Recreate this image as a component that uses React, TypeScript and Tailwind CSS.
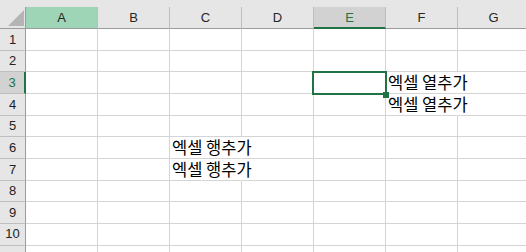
import React from "react";

const COLS = ["A", "B", "C", "D", "E", "F", "G"];
const ROWS = [1, 2, 3, 4, 5, 6, 7, 8, 9, 10, 11];

const TEXTS: Record<string, string> = {
  "3-F": "엑셀 열추가",
  "4-F": "엑셀 열추가",
  "6-C": "엑셀 행추가",
  "7-C": "엑셀 행추가",
};

function ColHeader({ c }: { c: string }) {
  if (c === "A") {
    return (
      <div className="w-[72px] shrink-0 h-full flex items-center justify-center bg-[#9fd5b7] border-r border-[#bdbdbd] border-b border-b-[#9b9b9b] text-[#262626]">
        {c}
      </div>
    );
  }
  if (c === "E") {
    return (
      <div className="w-[72px] shrink-0 h-full flex items-center justify-center bg-[#d2d2d2] border-r border-[#bdbdbd] border-b-2 border-b-[#217346] pt-[1px] text-[#217346]">
        {c}
      </div>
    );
  }
  return (
    <div className="w-[72px] shrink-0 h-full flex items-center justify-center bg-[#e6e6e6] border-r border-[#bdbdbd] border-b border-b-[#9b9b9b] text-[#262626]">
      {c}
    </div>
  );
}

function Cell({ r, c }: { r: number; c: string }) {
  const key = `${r}-${c}`;
  const text = TEXTS[key];
  const selected = r === 3 && c === "E";
  return (
    <div
      className={
        "relative w-[72px] shrink-0 h-full border-b border-[#d4d4d4] " +
        (text ? "border-r border-r-transparent" : "border-r border-r-[#d4d4d4]")
      }
    >
      {text && (
        <div className="absolute left-[2px] bottom-[2px] z-10 whitespace-nowrap text-[16.5px] leading-[17px] text-black font-['Noto_Sans_CJK_KR',sans-serif]">
          {text}
        </div>
      )}
      {selected && (
        <>
          <div className="absolute left-[-2px] top-[-1px] w-[75px] h-[24px] border-2 border-[#217346] z-20" />
          <div className="absolute left-[69px] top-[20px] w-[6px] h-[6px] bg-[#217346] z-30" />
        </>
      )}
    </div>
  );
}

export default function App() {
  return (
    <div className="w-[526px] h-[252px] overflow-hidden bg-white font-['Liberation_Sans',Arial,sans-serif] text-[13px]">
      <div className="h-[7px] bg-[#e6e6e6]" />
      <div className="flex h-[22px]">
        <div className="relative w-[26px] shrink-0 h-full bg-[#e6e6e6] border-r border-[#9b9b9b] border-b border-b-[#9b9b9b]">
          <svg className="absolute left-[8px] top-[3px]" width="16" height="16" viewBox="0 0 16 16">
            <polygon points="0,16 16,0 16,16" fill="#b4b4b4" />
          </svg>
        </div>
        {COLS.map((c) => (
          <ColHeader key={c} c={c} />
        ))}
      </div>
      {ROWS.map((r) => (
        <div key={r} className="flex h-[21.67px]">
          {r === 3 ? (
            <div className="w-[26px] shrink-0 h-full flex items-center justify-center bg-[#d2d2d2] border-r-2 border-[#217346] border-b border-b-[#bebebe] text-[#217346] text-[13px]">
              {r}
            </div>
          ) : (
            <div className="w-[26px] shrink-0 h-full flex items-center justify-center bg-[#e6e6e6] border-r border-[#9b9b9b] border-b border-b-[#bebebe] text-[#222] text-[13px]">
              {r === 11 ? "" : r}
            </div>
          )}
          {COLS.map((c) => (
            <Cell key={c} r={r} c={c} />
          ))}
        </div>
      ))}
    </div>
  );
}
